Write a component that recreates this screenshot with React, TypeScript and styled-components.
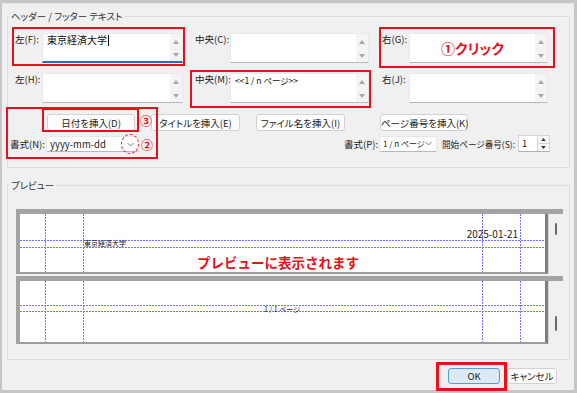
import React from "react";
import styled, { createGlobalStyle } from "styled-components";

const RED = "#e5121b";
const FONT = `"Noto Sans CJK JP", "Noto Sans", "Liberation Sans", sans-serif`;

const GlobalStyle = createGlobalStyle`
  html, body { margin: 0; padding: 0; background: #c6c6c6; }
  body { font-family: ${FONT}; }
  #root { width: 577px; height: 393px; overflow: hidden; }
  * { box-sizing: border-box; }
`;

const Frame = styled.div`
  width: 577px;
  height: 393px;
  background: #c6c6c6;
  padding: 3px 3px 3px 2px;
  display: flex;
`;

const Dialog = styled.div`
  flex: 1;
  display: flex;
  flex-direction: column;
  background: #f0f0f0;
  color: #1b1b1b;
  font-size: 9.5px;
  line-height: 12px;
  font-feature-settings: "palt";
  border-top: 1px solid #e4e4e4;
`;

const Group = styled.fieldset<{ $mt: number; $pt: number; $pb: number }>`
  margin: ${(p) => p.$mt}px 4px 0 5px;
  border: 1px solid #dcdcdc;
  padding: ${(p) => p.$pt}px 0 ${(p) => p.$pb}px 0;
  min-width: 0;
`;

const Legend = styled.legend`
  margin-left: 1px;
  padding: 0 2px;
  font-size: 9.5px;
  line-height: 12px;
  color: #333;
`;

const FieldRow = styled.div<{ $mt?: number }>`
  display: flex;
  margin-top: ${(p) => p.$mt ?? 0}px;
  padding-left: 7px;
`;

const Field = styled.div<{ $ml: number }>`
  position: relative;
  display: flex;
  margin-left: ${(p) => p.$ml}px;
`;

const FieldLabel = styled.span<{ $w: number }>`
  width: ${(p) => p.$w}px;
  flex-shrink: 0;
  white-space: nowrap;
`;

const TextBox = styled.div<{ $w: number; $focused?: boolean }>`
  width: ${(p) => p.$w}px;
  height: 30px;
  display: flex;
  background: #fff;
  border: 1px solid #e9e9e9;
  border-bottom: ${(p) => (p.$focused ? "2px solid #1e6fc4" : "1px solid #b8b8b8")};
`;

const TextBody = styled.div<{ $variant?: "normal" | "small" | "callout" }>`
  flex: 1;
  padding: ${(p) => (p.$variant === "small" ? "1px 4px 0" : "0 4px")};
  font-size: ${(p) => (p.$variant === "small" ? "8.5px" : p.$variant === "callout" ? "14px" : "10px")};
  line-height: ${(p) => (p.$variant === "small" ? "10px" : "12px")};
  color: ${(p) => (p.$variant === "callout" ? RED : "#111")};
  font-weight: ${(p) => (p.$variant === "callout" ? 700 : 400)};
  display: ${(p) => (p.$variant === "callout" ? "flex" : "block")};
  align-items: center;
  justify-content: center;
  white-space: nowrap;
`;

const Caret = styled.span`
  display: inline-block;
  width: 1px;
  height: 11px;
  background: #111;
  vertical-align: -2px;
  margin-left: 1px;
`;

const ScrollStrip = styled.div`
  width: 12px;
  background: #f4f4f4;
  display: flex;
  flex-direction: column;
  justify-content: space-between;
  align-items: center;
  padding: 6px 0 4px;
`;

const Mark = styled.div<{ $t: number; $l: number; $r: number; $b: number; $bw?: number }>`
  position: absolute;
  top: ${(p) => p.$t}px;
  left: ${(p) => p.$l}px;
  right: ${(p) => p.$r}px;
  bottom: ${(p) => p.$b}px;
  border: ${(p) => p.$bw ?? 2}px solid ${RED};
  pointer-events: none;
  z-index: 2;
`;

const DashedCircle = styled.div`
  position: absolute;
  left: 74px;
  top: -3px;
  width: 18px;
  height: 20px;
  border: 1px dashed ${RED};
  border-radius: 50%;
  z-index: 2;
`;

const Badge = styled.span<{ $l: number; $t: number }>`
  position: absolute;
  left: ${(p) => p.$l}px;
  top: ${(p) => p.$t}px;
  color: ${RED};
  font-weight: 700;
  font-size: 12px;
  line-height: 14px;
  z-index: 2;
`;

const ActionArea = styled.div`
  display: flex;
  margin-top: 11px;
`;

const LeftCol = styled.div`
  position: relative;
  width: 135px;
  display: flex;
  flex-direction: column;
  align-items: flex-start;
`;

const RightCol = styled.div`
  flex: 1;
  display: flex;
  flex-direction: column;
`;

const ButtonRow = styled.div`
  display: flex;
`;

const BtnWrap = styled.div<{ $ml: number }>`
  position: relative;
  display: flex;
  margin-left: ${(p) => p.$ml}px;
`;

const Btn = styled.button<{ $w: number; $ml?: number; $primary?: boolean }>`
  width: ${(p) => p.$w}px;
  margin-left: ${(p) => p.$ml ?? 0}px;
  height: ${(p) => (p.$primary !== undefined ? 16 : 17)}px;
  padding: 0;
  border: 1px solid ${(p) => (p.$primary ? "#5b9be0" : "#d2d2d2")};
  border-radius: 3px;
  background: ${(p) => (p.$primary ? "#dde9f6" : "#fdfdfd")};
  font-family: ${FONT};
  font-feature-settings: "palt";
  font-size: 9.5px;
  line-height: 14px;
  color: #1b1b1b;
  white-space: nowrap;
`;

const FormatRow = styled.div<{ $mt: number; $end?: boolean }>`
  display: flex;
  align-items: center;
  margin-top: ${(p) => p.$mt}px;
  justify-content: ${(p) => (p.$end ? "flex-end" : "flex-start")};
  padding-right: ${(p) => (p.$end ? 19 : 0)}px;
`;

const InlineLabel = styled.span<{ $ml?: number; $w?: number; $small?: boolean }>`
  margin-left: ${(p) => p.$ml ?? 0}px;
  ${(p) => (p.$w ? `width: ${p.$w}px;` : "")}
  font-size: ${(p) => (p.$small ? "8.6px" : "9.5px")};
  white-space: nowrap;
  flex-shrink: 0;
`;

const Combo = styled.div<{ $w: number; $ml?: number }>`
  position: relative;
  width: ${(p) => p.$w}px;
  margin-left: ${(p) => p.$ml ?? 0}px;
  height: 16px;
  flex-shrink: 0;
  background: #fff;
  border: 1px solid #e6e6e6;
  border-bottom-color: #b8b8b8;
  border-radius: 2px;
  display: flex;
  align-items: center;
  padding: 0 4px 0 3px;
  font-size: 9.5px;
`;

const ComboText = styled.span<{ $small?: boolean }>`
  flex: 1;
  white-space: nowrap;
  font-size: ${(p) => (p.$small ? "8px" : "9.5px")};
`;

const Spin = styled.div`
  width: 32px;
  height: 17px;
  margin-left: 2px;
  flex-shrink: 0;
  display: flex;
  background: #fff;
  border: 1px solid #d6d6d6;
  border-bottom-color: #b0b0b0;
`;

const SpinText = styled.span`
  flex: 1;
  padding-left: 3px;
  line-height: 15px;
`;

const SpinButtons = styled.div`
  width: 12px;
  display: flex;
  flex-direction: column;
  border-left: 1px solid #d6d6d6;
`;

const SpinButton = styled.div`
  flex: 1;
  display: flex;
  align-items: center;
  justify-content: center;
  background: #f7f7f7;
  & + & {
    border-top: 1px solid #d6d6d6;
  }
`;

const PreviewStack = styled.div`
  display: flex;
  flex-direction: column;
  gap: 2px;
  margin: 0 6px 0 8px;
`;

const PreviewPanel = styled.div<{ $h: number }>`
  display: flex;
  height: ${(p) => p.$h}px;
  border-top: 5px solid #a3a3a3;
  background: #e3e3e3;
`;

const Page = styled.div`
  position: relative;
  flex: 1;
  background: #fff;
  border-left: 4px solid #a3a3a3;
  border-right: 3px solid #7f7f7f;
  border-bottom: 2px solid #9c9c9c;
`;

const PageSvg = styled.svg`
  display: block;
  width: 100%;
  height: 100%;
`;

const PreviewCallout = styled.span`
  position: absolute;
  left: 177px;
  top: 40px;
  color: ${RED};
  font-weight: 700;
  font-size: 13.5px;
  line-height: 16px;
  white-space: nowrap;
  font-feature-settings: normal;
`;

const ScrollTrack = styled.div`
  position: relative;
  width: 15px;
  background: #f0f0f0;
  border-left: 1px solid #d9d9d9;
`;

const Thumb = styled.div<{ $t: number; $h: number }>`
  position: absolute;
  left: 6px;
  top: ${(p) => p.$t}px;
  width: 2px;
  height: ${(p) => p.$h}px;
  background: #6a6a6a;
  border-radius: 1px;
`;

const Footer = styled.div`
  display: flex;
  justify-content: flex-end;
  margin-top: 8px;
  padding-right: 17px;
`;

const OkWrap = styled.div`
  position: relative;
  display: flex;
`;

const Tri = ({ up, color = "#a8a8a8", w = 6, h = 4 }: { up?: boolean; color?: string; w?: number; h?: number }) => (
  <svg width={w} height={h} viewBox="0 0 6 4">
    <polygon points={up ? "0,4 6,4 3,0" : "0,0 6,0 3,4"} fill={color} />
  </svg>
);

const Chevron = () => (
  <svg width="7" height="5" viewBox="0 0 7 5">
    <polyline points="0.5,1 3.5,4 6.5,1" fill="none" stroke="#707070" strokeWidth="0.9" />
  </svg>
);

const Strip = () => (
  <ScrollStrip>
    <Tri up />
    <Tri />
  </ScrollStrip>
);

const GUIDE = "#7474ff";

const Guides = ({ h1, h2 }: { h1: number; h2: number }) => (
  <>
    {[25, 63, 462, 500].map((x) => (
      <line key={x} x1={x + 0.5} y1={0} x2={x + 0.5} y2={80} stroke={GUIDE} strokeWidth={1} strokeDasharray="2 1" />
    ))}
    {[h1, h2].map((y) => (
      <line key={y} x1={0} y1={y + 0.5} x2={530} y2={y + 0.5} stroke={GUIDE} strokeWidth={1} strokeDasharray="2 1" />
    ))}
  </>
);

export default function App() {
  return (
    <>
      <GlobalStyle />
      <Frame>
        <Dialog>
          <Group $mt={6} $pt={11} $pb={15}>
            <Legend>ヘッダー / フッター テキスト</Legend>
            <FieldRow>
              <Field $ml={0}>
                <FieldLabel $w={27}>左(F):</FieldLabel>
                <TextBox $w={141} $focused>
                  <TextBody>
                    東京経済大学
                    <Caret />
                  </TextBody>
                  <Strip />
                </TextBox>
                <Mark $t={-6} $l={-3} $r={-2} $b={-3} />
              </Field>
              <Field $ml={12}>
                <FieldLabel $w={35}>中央(C):</FieldLabel>
                <TextBox $w={139}>
                  <TextBody />
                  <Strip />
                </TextBox>
              </Field>
              <Field $ml={13}>
                <FieldLabel $w={27}>右(G):</FieldLabel>
                <TextBox $w={139}>
                  <TextBody $variant="callout">①クリック</TextBody>
                  <Strip />
                </TextBox>
                <Mark $t={-6} $l={-3} $r={-7} $b={-5} />
              </Field>
            </FieldRow>
            <FieldRow $mt={10}>
              <Field $ml={0}>
                <FieldLabel $w={27}>左(H):</FieldLabel>
                <TextBox $w={141}>
                  <TextBody />
                  <Strip />
                </TextBox>
              </Field>
              <Field $ml={12}>
                <FieldLabel $w={35}>中央(M):</FieldLabel>
                <TextBox $w={139}>
                  <TextBody $variant="small">&lt;&lt;1 / n ページ&gt;&gt;</TextBody>
                  <Strip />
                </TextBox>
                <Mark $t={-3} $l={-5} $r={-2} $b={-5} />
              </Field>
              <Field $ml={13}>
                <FieldLabel $w={27}>右(J):</FieldLabel>
                <TextBox $w={139}>
                  <TextBody />
                  <Strip />
                </TextBox>
              </Field>
            </FieldRow>

            <ActionArea>
              <LeftCol>
                <BtnWrap $ml={39}>
                  <Btn $w={88}>日付を挿入(D)</Btn>
                  <Mark $t={-6} $l={-5} $r={-4} $b={-1} />
                  <Badge $l={93} $t={0}>③</Badge>
                </BtnWrap>
                <FormatRow $mt={5}>
                  <InlineLabel $ml={2} $w={36}>書式(N):</InlineLabel>
                  <Combo $w={93}>
                    <ComboText>yyyy-mm-dd</ComboText>
                    <Chevron />
                    <DashedCircle />
                    <Badge $l={94} $t={1}>②</Badge>
                  </Combo>
                </FormatRow>
                <Mark $t={-7} $l={-2} $r={-15} $b={-7} />
              </LeftCol>
              <RightCol>
                <ButtonRow>
                  <Btn $w={89} $ml={8}>タイトルを挿入(E)</Btn>
                  <Btn $w={89} $ml={16}>ファイル名を挿入(I)</Btn>
                  <Btn $w={88} $ml={35}>ページ番号を挿入(K)</Btn>
                </ButtonRow>
                <FormatRow $mt={4} $end>
                  <InlineLabel $w={35}>書式(P):</InlineLabel>
                  <Combo $w={58}>
                    <ComboText $small>1 / n ページ</ComboText>
                    <Chevron />
                  </Combo>
                  <InlineLabel $ml={5} $w={74} $small>開始ページ番号(S):</InlineLabel>
                  <Spin>
                    <SpinText>1</SpinText>
                    <SpinButtons>
                      <SpinButton>
                        <Tri up color="#333" w={5} h={3} />
                      </SpinButton>
                      <SpinButton>
                        <Tri color="#333" w={5} h={3} />
                      </SpinButton>
                    </SpinButtons>
                  </Spin>
                </FormatRow>
              </RightCol>
            </ActionArea>
          </Group>

          <Group $mt={11} $pt={18} $pb={15}>
            <Legend>プレビュー</Legend>
            <PreviewStack>
              <PreviewPanel $h={65}>
                <Page>
                  <PageSvg>
                    <Guides h1={26} h2={33} />
                    <text x={64} y={32} fontSize={7} fill="#222" fontFamily={FONT}>
                      東京経済大学
                    </text>
                    <text x={498} y={24} fontSize={10} fill="#222" textAnchor="end" fontFamily={FONT}>
                      2025-01-21
                    </text>
                  </PageSvg>
                  <PreviewCallout>プレビューに表示されます</PreviewCallout>
                </Page>
                <ScrollTrack>
                  <Thumb $t={9} $h={12} />
                </ScrollTrack>
              </PreviewPanel>
              <PreviewPanel $h={68}>
                <Page>
                  <PageSvg>
                    <Guides h1={24} h2={30} />
                    <text x={262} y={31} fontSize={7} fill="#222" textAnchor="middle" fontFamily={FONT}>
                      1 / 1 ページ
                    </text>
                  </PageSvg>
                </Page>
                <ScrollTrack>
                  <Thumb $t={35} $h={15} />
                </ScrollTrack>
              </PreviewPanel>
            </PreviewStack>
          </Group>

          <Footer>
            <OkWrap>
              <Btn $w={52} $primary>OK</Btn>
              <Mark $t={-6} $l={-12} $r={-7} $b={-7} $bw={3} />
            </OkWrap>
            <Btn $w={50} $ml={7} $primary={false}>キャンセル</Btn>
          </Footer>
        </Dialog>
      </Frame>
    </>
  );
}
